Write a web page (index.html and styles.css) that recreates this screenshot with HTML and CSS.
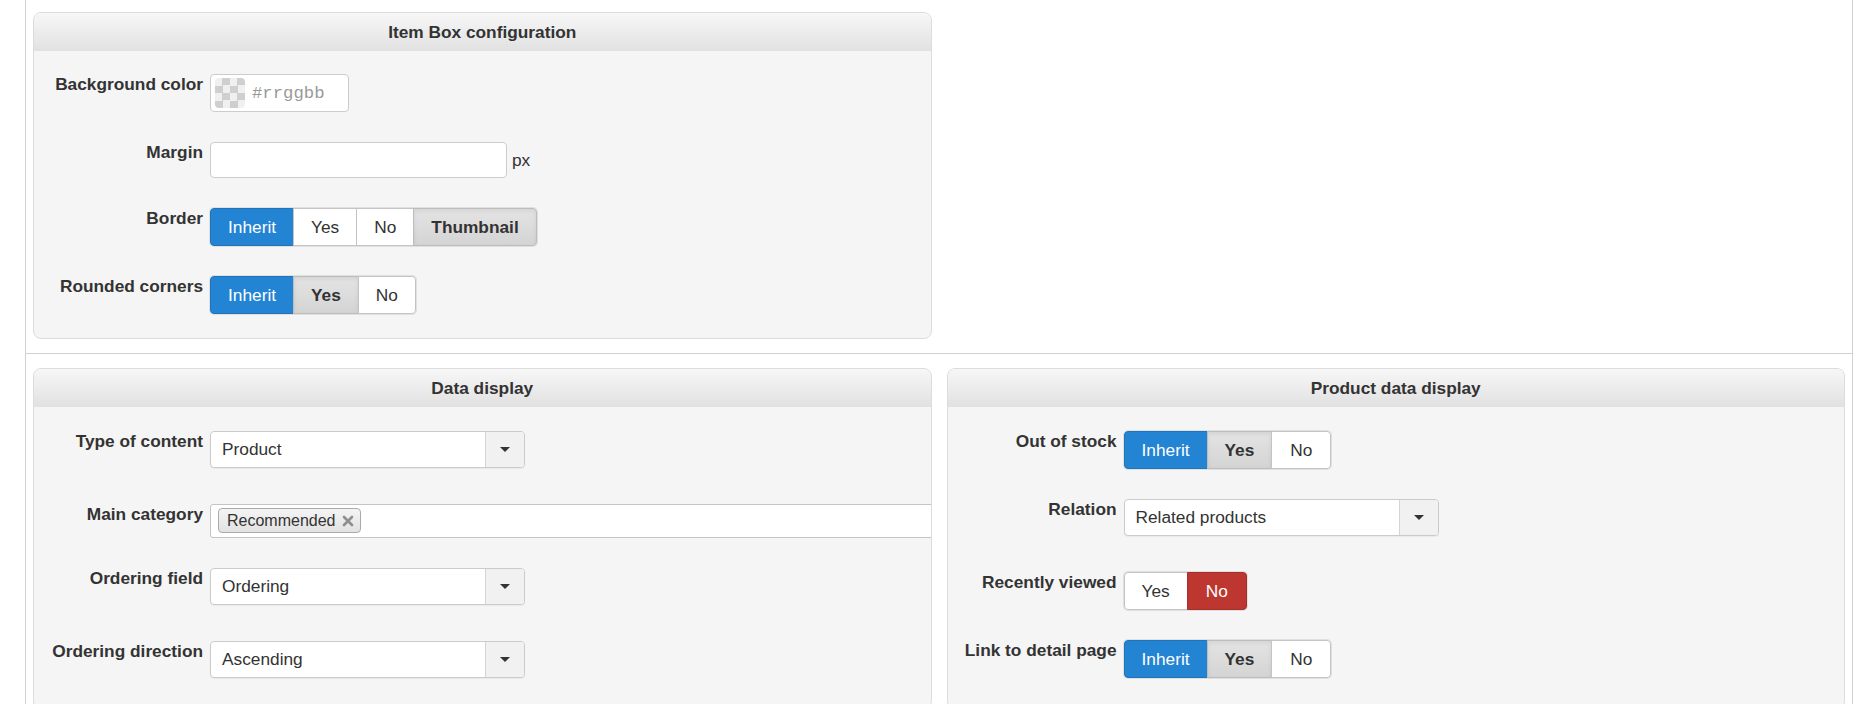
FILE: index.html
```html
<!DOCTYPE html>
<html lang="en">
<head>
    <meta charset="UTF-8">
    <title>Module options</title>
    <link rel="stylesheet" href="styles.css">
</head>
<body>
    <div class="sheet">
        <!-- Primera fila -->
        <div class="row">
            <div class="panel">
                <div class="panel-head">Item Box configuration</div>
                <div class="panel-body">
                    <div class="field">
                        <label class="field-label">Background color</label>
                        <div class="color-input">
                            <span class="swatch"></span>
                            <span class="hex">#rrggbb</span>
                        </div>
                    </div>
                    <div class="field">
                        <label class="field-label">Margin</label>
                        <input class="text-input" type="text">
                        <span class="unit">px</span>
                    </div>
                    <div class="field">
                        <label class="field-label">Border</label>
                        <div class="btn-group">
                            <span class="btn primary">Inherit</span>
                            <span class="btn">Yes</span>
                            <span class="btn">No</span>
                            <span class="btn checked">Thumbnail</span>
                        </div>
                    </div>
                    <div class="field">
                        <label class="field-label">Rounded corners</label>
                        <div class="btn-group">
                            <span class="btn primary">Inherit</span>
                            <span class="btn checked">Yes</span>
                            <span class="btn">No</span>
                        </div>
                    </div>
                </div>
            </div>
            <div></div>
        </div>

        <!-- Segunda fila -->
        <div class="row">
            <div class="panel">
                <div class="panel-head">Data display</div>
                <div class="panel-body">
                    <div class="field">
                        <label class="field-label">Type of content</label>
                        <div class="select"><span class="select-text">Product</span><span class="select-arrow"></span></div>
                    </div>
                    <div class="field">
                        <label class="field-label">Main category</label>
                        <div class="tag-input">
                            <span class="tag">Recommended
                                <svg class="tag-x" width="12" height="12" viewBox="0 0 12 12"><path d="M2 2 L10 10 M10 2 L2 10" stroke="#8f8f8f" stroke-width="2.6" stroke-linecap="round"/></svg>
                            </span>
                        </div>
                    </div>
                    <div class="field">
                        <label class="field-label">Ordering field</label>
                        <div class="select"><span class="select-text">Ordering</span><span class="select-arrow"></span></div>
                    </div>
                    <div class="field">
                        <label class="field-label">Ordering direction</label>
                        <div class="select"><span class="select-text">Ascending</span><span class="select-arrow"></span></div>
                    </div>
                </div>
            </div>

            <div class="panel">
                <div class="panel-head">Product data display</div>
                <div class="panel-body">
                    <div class="field">
                        <label class="field-label">Out of stock</label>
                        <div class="btn-group">
                            <span class="btn primary">Inherit</span>
                            <span class="btn checked">Yes</span>
                            <span class="btn wide">No</span>
                        </div>
                    </div>
                    <div class="field">
                        <label class="field-label">Relation</label>
                        <div class="select"><span class="select-text">Related products</span><span class="select-arrow"></span></div>
                    </div>
                    <div class="field">
                        <label class="field-label">Recently viewed</label>
                        <div class="btn-group">
                            <span class="btn">Yes</span>
                            <span class="btn danger wide">No</span>
                        </div>
                    </div>
                    <div class="field">
                        <label class="field-label">Link to detail page</label>
                        <div class="btn-group">
                            <span class="btn primary">Inherit</span>
                            <span class="btn checked">Yes</span>
                            <span class="btn wide">No</span>
                        </div>
                    </div>
                </div>
            </div>
        </div>
    </div>
</body>
</html>
```

FILE: styles.css
```css
/* Base */
body {
    margin: 0;
    font-family: 'Liberation Sans', Arial, sans-serif;
    font-size: 17.3px;
    color: #333;
    background: #fff;
}

/* Contenedor con bordes laterales */
.sheet {
    margin-left: 25px;
    width: 1828px;
    box-sizing: border-box;
    border-left: 1px solid #d0d0d0;
    border-right: 1px solid #d0d0d0;
    min-height: 704px;
}

.row {
    display: grid;
    grid-template-columns: 1fr 1fr;
    column-gap: 15px;
    padding: 12px 7px 14px;
}

.row + .row {
    border-top: 1px solid #d0d0d0;
    padding-top: 14px;
}

/* Paneles */
.panel {
    background: #f5f5f5;
    border: 1px solid #dcdcdc;
    border-radius: 8px;
    overflow: hidden;
}

.panel-head {
    height: 38px;
    line-height: 38px;
    text-align: center;
    font-weight: bold;
    background: linear-gradient(#f7f7f7, #e1e1e1);
}

.panel-body {
    padding: 23px 0 24px;
}

.row + .row .panel-body {
    padding-top: 24px;
}

.field {
    display: flex;
    align-items: flex-start;
    margin-bottom: 30px;
}

.field:last-child {
    margin-bottom: 0;
}

.field-label {
    width: 169px;
    flex: none;
    margin-right: 7px;
    text-align: right;
    font-weight: bold;
    line-height: 20px;
}

/* Color */
.color-input {
    width: 139px;
    height: 38px;
    box-sizing: border-box;
    border: 1px solid #ccc;
    border-radius: 4px;
    background: #fff;
    display: flex;
    align-items: center;
    padding: 0 4px;
}

.swatch {
    width: 30px;
    height: 30px;
    border-radius: 4px;
    background: repeating-conic-gradient(#cfcfcf 0 25%, #f0f0f0 0 50%) 0 0 / 15px 15px;
    margin-right: 7px;
}

.hex {
    font-family: 'Liberation Mono', 'Courier New', monospace;
    font-size: 17.3px;
    color: #999;
}

/* Texto */
.text-input {
    width: 297px;
    height: 36px;
    box-sizing: border-box;
    border: 1px solid #ccc;
    border-radius: 4px;
    background: #fff;
    margin: 0;
    font: inherit;
}

.unit {
    margin-left: 5px;
    align-self: center;
}

/* Grupos de botones */
.btn-group {
    display: flex;
    border-radius: 4px;
    box-shadow: 0 0 0 1px #e0e0e0;
}

.btn {
    height: 38px;
    line-height: 36px;
    box-sizing: border-box;
    padding: 0 17px;
    background: #fff;
    border: 1px solid #c4c4c4;
    margin-left: -1px;
    color: #333;
}

.btn:first-child {
    margin-left: 0;
    border-radius: 4px 0 0 4px;
}

.btn:last-child {
    border-radius: 0 4px 4px 0;
}

.btn.wide {
    padding: 0 18px;
}

.btn.primary {
    background: #2384d3;
    border-color: #1f74ba;
    color: #fff;
}

.btn.checked {
    background: linear-gradient(#e4e4e4, #d4d4d4);
    border-color: #bdbdbd;
    font-weight: bold;
    box-shadow: inset 0 2px 4px rgba(0, 0, 0, 0.08);
}

.btn.danger {
    background: #bd362f;
    border-color: #a52f29;
    color: #fff;
}

/* Selects */
.select {
    width: 315px;
    height: 37px;
    box-sizing: border-box;
    border: 1px solid #cbcbcb;
    border-radius: 4px;
    background: #fff;
    display: flex;
    margin-bottom: 6px;
    box-shadow: 0 1px 1px rgba(0, 0, 0, 0.05);
    overflow: hidden;
}

.select-text {
    flex: 1;
    padding-left: 11px;
    line-height: 35px;
}

.select-arrow {
    width: 38px;
    background: #f1f1f1;
    border-left: 1px solid #d4d4d4;
    position: relative;
}

.select-arrow::after {
    content: "";
    position: absolute;
    left: 14px;
    top: 15px;
    border-top: 5px solid #333;
    border-left: 5px solid transparent;
    border-right: 5px solid transparent;
}

/* Etiquetas */
.tag-input {
    flex: 1;
    margin-right: -1px;
    height: 34px;
    box-sizing: border-box;
    border: 1px solid #c4c4c4;
    border-radius: 3px 0 0 3px;
    background: #fff;
    padding: 3px 7px;
}

.tag {
    display: inline-flex;
    align-items: center;
    height: 25px;
    box-sizing: border-box;
    padding: 0 6px 0 8px;
    border: 1px solid #aaa;
    border-radius: 4px;
    background: linear-gradient(#f4f4f4, #e2e2e2);
    font-size: 16px;
    color: #333;
}

.tag-x {
    margin-left: 6px;
}
```
